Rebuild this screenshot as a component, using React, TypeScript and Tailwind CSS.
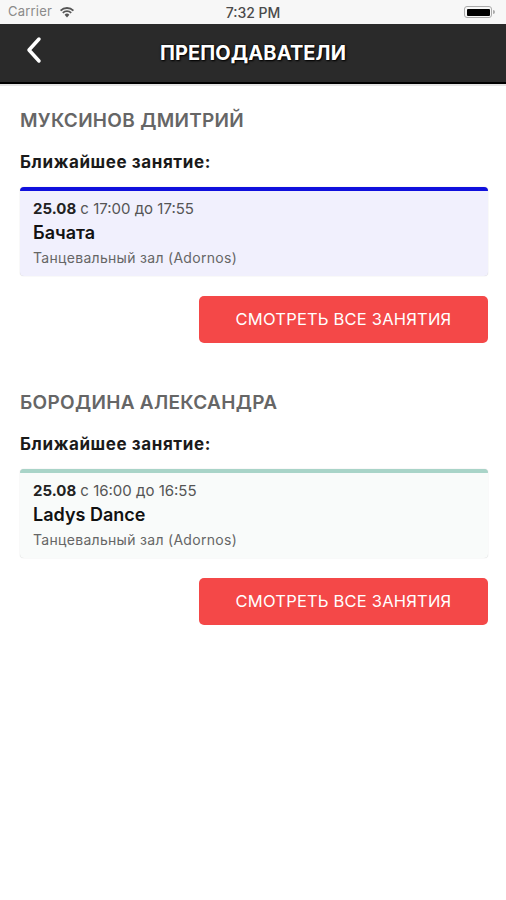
import React from "react";

const font = { fontFamily: "Inter, 'Noto Sans', 'Liberation Sans', sans-serif" };

function StatusBar() {
  return (
    <div className="relative h-[24px] bg-[#f7f7f7] flex items-center px-[8px] text-[13px] text-[#8a8a8a]">
      <span className="tracking-[0.2px]">Carrier</span>
      <svg width="16" height="12" viewBox="0 0 16 12" className="ml-[7px]">
        <path d="M8 11.5 L5.6 8.8 A3.4 3.4 0 0 1 10.4 8.8 Z" fill="#555" />
        <path d="M3.8 6.9 A6 6 0 0 1 12.2 6.9" stroke="#555" strokeWidth="1.8" fill="none" />
        <path d="M1.6 4.6 A9.2 9.2 0 0 1 14.4 4.6" stroke="#555" strokeWidth="1.8" fill="none" />
      </svg>
      <span className="absolute left-0 right-0 text-center text-[14px] font-medium text-[#4a4a4a] pointer-events-none">
        7:32 PM
      </span>
      <div className="ml-auto flex items-center mr-[3px]">
        <div className="w-[28px] h-[12px] rounded-[3px] border border-[#aaa] p-[1.5px]">
          <div className="w-full h-full bg-black rounded-[1px]" />
        </div>
        <div className="w-[2px] h-[4px] bg-[#aaa] rounded-r-sm ml-[1px]" />
      </div>
    </div>
  );
}

function NavBar() {
  return (
    <div className="relative h-[60px] bg-[#2a2a2a] border-b-2 border-black flex items-center justify-center">
      <svg
        width="20"
        height="28"
        viewBox="0 0 20 28"
        className="absolute left-[24px] top-[12px]"
      >
        <path d="M15 3 L5 14 L15 25" stroke="white" strokeWidth="3.5" fill="none" strokeLinecap="round" strokeLinejoin="round" />
      </svg>
      <span
        className="text-white text-[20px] font-bold tracking-[0.1px]"
        style={{ textShadow: "0 0 2px #000, 1px 1px 2px #000" }}
      >
        ПРЕПОДАВАТЕЛИ
      </span>
    </div>
  );
}

function Teacher({
  name,
  date,
  time,
  title,
  place,
  barColor,
  bg,
}: {
  name: string;
  date: string;
  time: string;
  title: string;
  place: string;
  barColor: string;
  bg: string;
}) {
  return (
    <div className="flex flex-col pl-[20px] pr-[18px]">
      <div className="text-[19px] font-semibold text-[#666] leading-[22px] tracking-[0.3px]">{name}</div>
      <div className="mt-[19px] text-[17px] font-bold text-[#1a1a1a] leading-[22px] tracking-[0.6px]">Ближайшее занятие:</div>
      <div
        className="mt-[14px] rounded-[4px] border-t-4 shadow-[0_0_1px_rgba(0,0,0,0.25)] px-[13px] pt-[9px] pb-[9px]"
        style={{ borderTopColor: barColor, backgroundColor: bg }}
      >
        <div className="text-[15px] leading-[18px] text-[#555]">
          <span className="font-bold text-[#222]">{date}</span> {time}
        </div>
        <div className="mt-[3px] text-[18px] font-semibold text-[#111] leading-[23px]">{title}</div>
        <div className="mt-[4px] text-[14px] text-[#666] leading-[19px] tracking-[0.3px]">{place}</div>
      </div>
      <div className="flex justify-end mt-[20px]">
        <button className="w-[289px] h-[47px] rounded-[5px] bg-[#f44848] text-white text-[16.5px] tracking-[0.2px]">
          СМОТРЕТЬ ВСЕ ЗАНЯТИЯ
        </button>
      </div>
    </div>
  );
}

export default function App() {
  return (
    <div className="w-[506px] h-[900px] bg-white overflow-hidden" style={font}>
      <StatusBar />
      <NavBar />
      <div className="h-[2px] bg-[#e4e4e4]" />
      <div className="pt-[24px] flex flex-col gap-[49px]">
        <Teacher
          name="МУКСИНОВ ДМИТРИЙ"
          date="25.08"
          time="с 17:00 до 17:55"
          title="Бачата"
          place="Танцевальный зал (Adornos)"
          barColor="#1010dd"
          bg="#f1f0fd"
        />
        <Teacher
          name="БОРОДИНА АЛЕКСАНДРА"
          date="25.08"
          time="с 16:00 до 16:55"
          title="Ladys Dance"
          place="Танцевальный зал (Adornos)"
          barColor="#a9d4c8"
          bg="#f9fbfa"
        />
      </div>
    </div>
  );
}
